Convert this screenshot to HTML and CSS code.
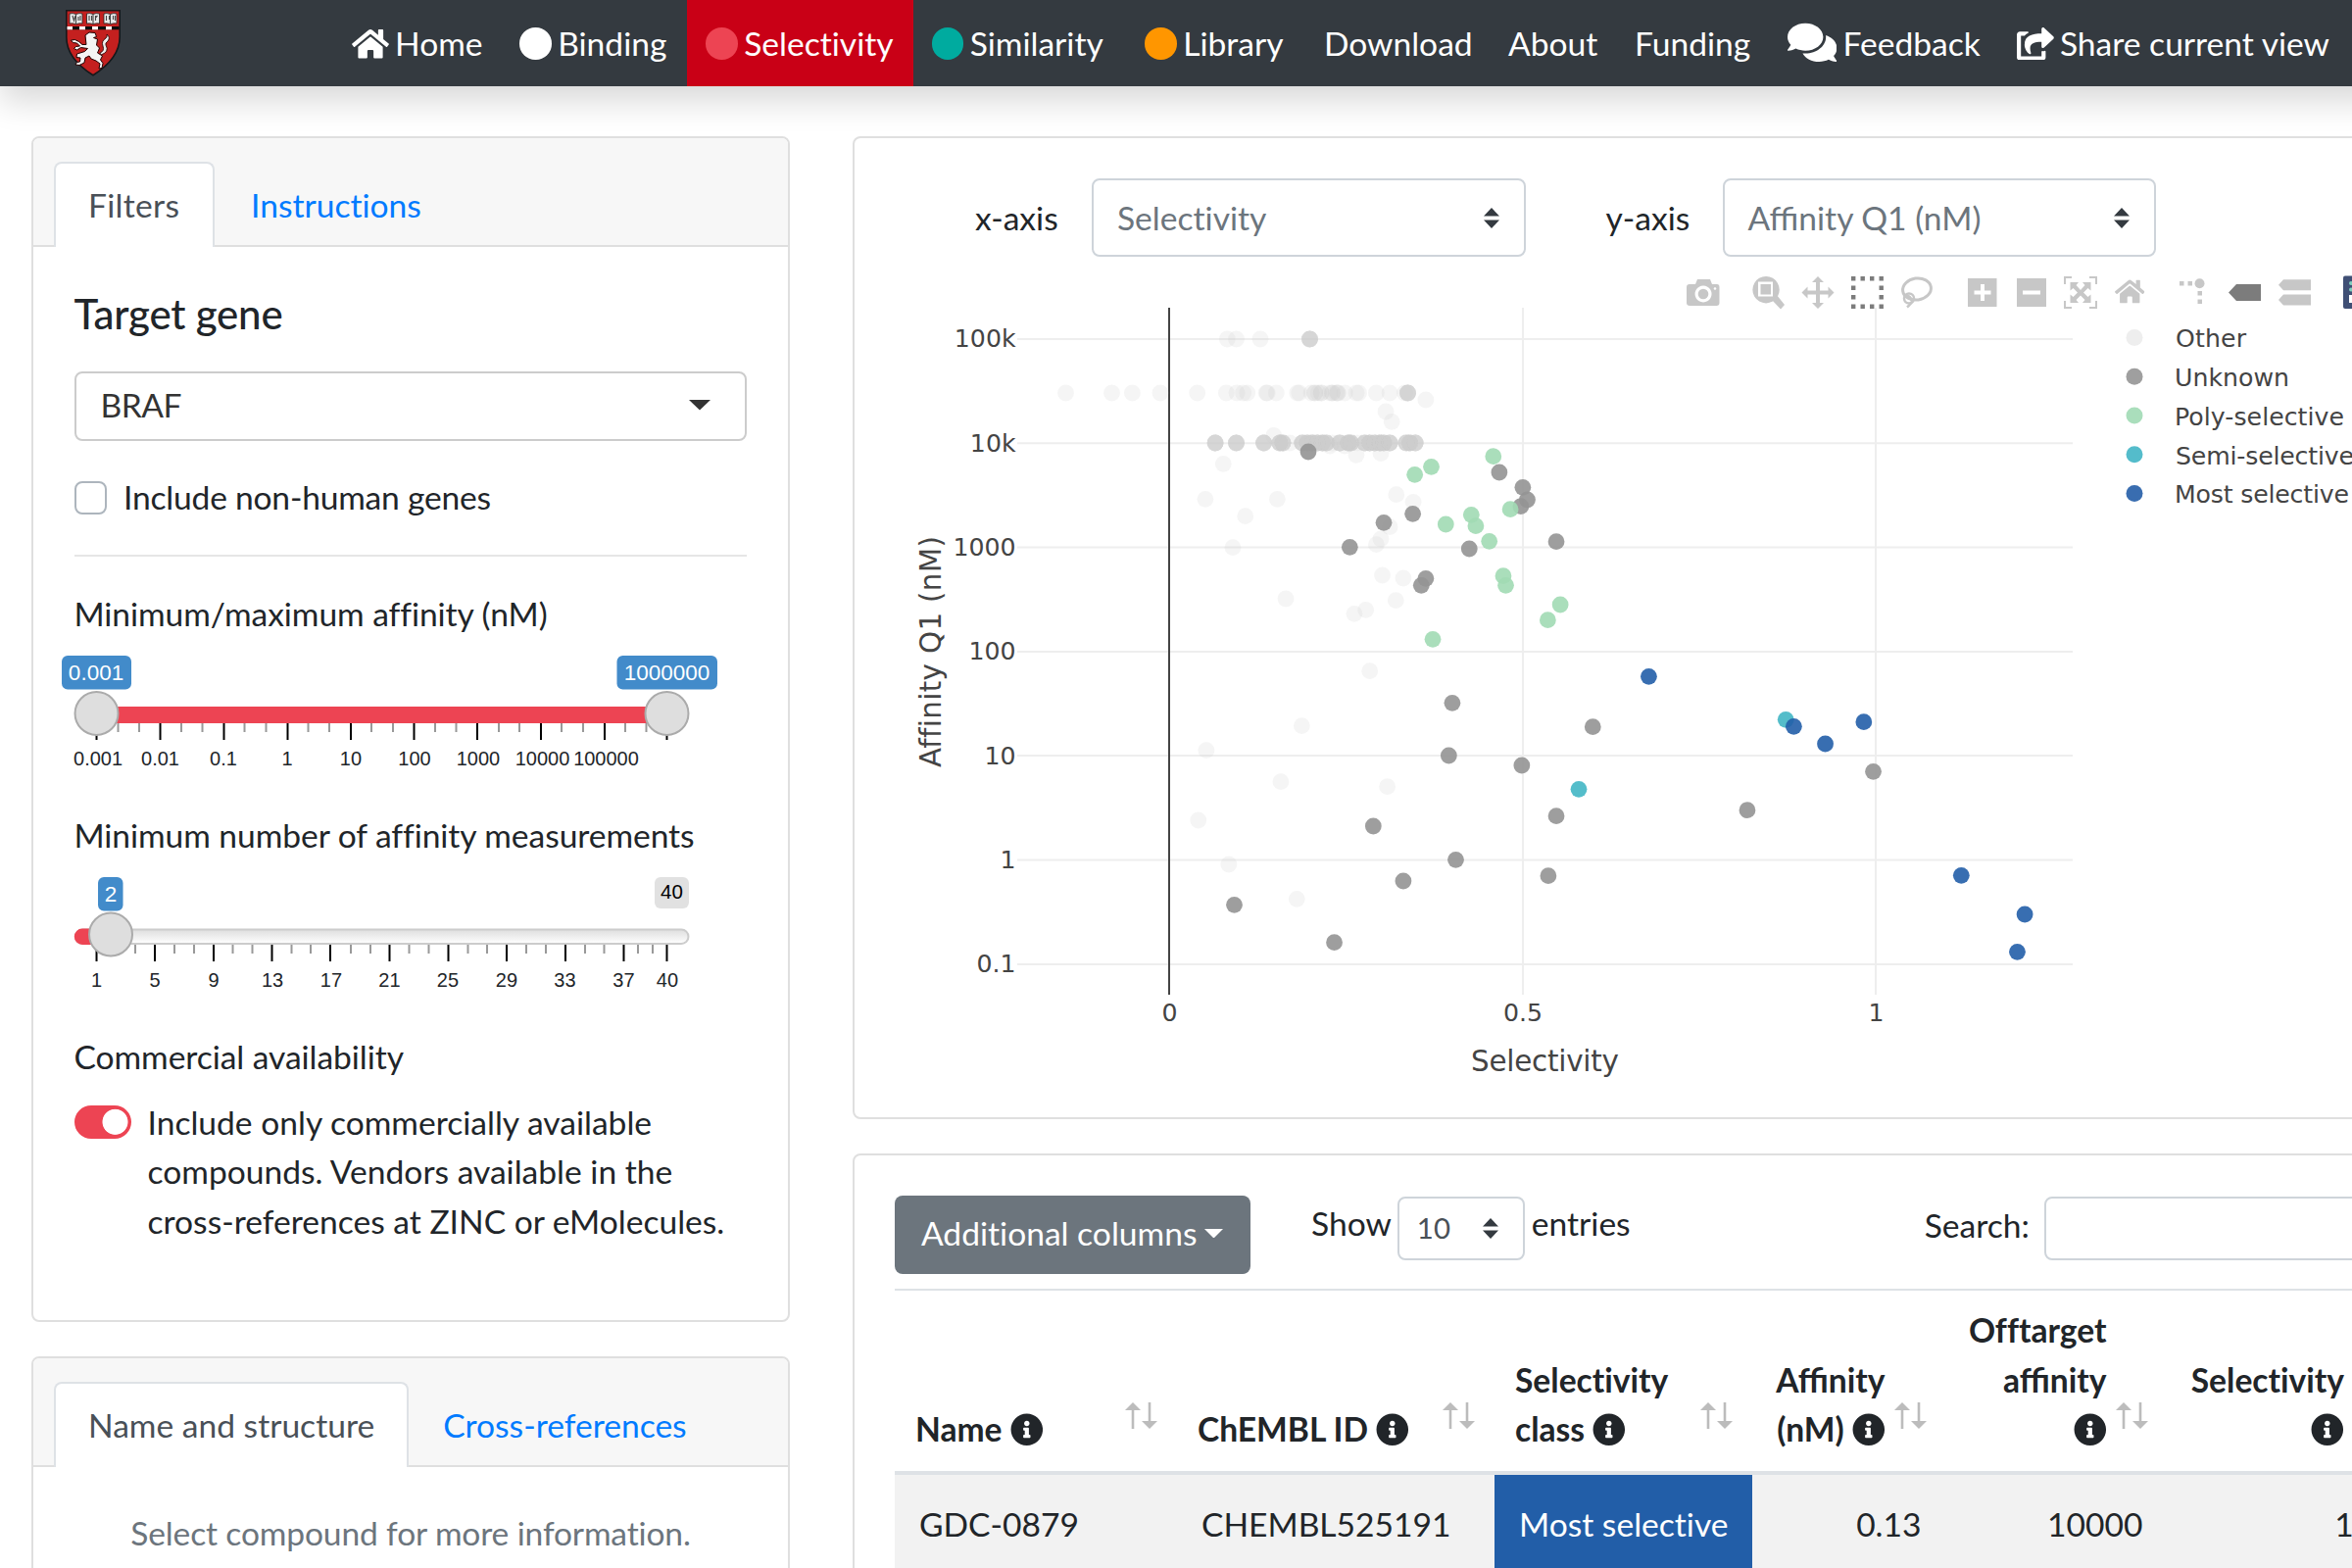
FILE: index.html
```html
<!DOCTYPE html>
<html lang="en">
<head>
<meta charset="utf-8">
<title>Selectivity</title>
<link rel="stylesheet" href="styles.css">
</head>
<body>
<svg class="defs" width="0" height="0">
  <symbol id="info" viewBox="0 0 512 512"><path d="M256 8C119.043 8 8 119.083 8 256c0 136.997 111.043 248 248 248s248-111.003 248-248C504 119.083 392.957 8 256 8zm0 110c23.196 0 42 18.804 42 42s-18.804 42-42 42-42-18.804-42-42 18.804-42 42-42zm56 254c0 6.627-5.373 12-12 12h-88c-6.627 0-12-5.373-12-12v-24c0-6.627 5.373-12 12-12h12v-64h-12c-6.627 0-12-5.373-12-12v-24c0-6.627 5.373-12 12-12h64c6.627 0 12 5.373 12 12v100h12c6.627 0 12 5.373 12 12v24z"/></symbol>
  <symbol id="updown" viewBox="0 0 16 21"><path d="M8 0l8 8.5H0zM8 21l8-8.5H0z"/></symbol>
  <symbol id="sort" viewBox="0 0 33 27"><path d="M8 0l8 8H9.300V27H6.700V8H0zM25 27l-8-8h6.700V0h2.600v19H33z"/></symbol>
  <symbol id="home" viewBox="0 0 576 512"><path d="M280.37 148.26L96 300.11V464a16 16 0 0 0 16 16l112.06-.29a16 16 0 0 0 15.92-16V368a16 16 0 0 1 16-16h64a16 16 0 0 1 16 16v95.64a16 16 0 0 0 16 16.05L464 480a16 16 0 0 0 16-16V300L295.67 148.26a12.19 12.19 0 0 0-15.3 0zM571.6 251.47L488 182.56V44.05a12 12 0 0 0-12-12h-56a12 12 0 0 0-12 12v72.61L318.47 43a48 48 0 0 0-61 0L4.34 251.47a12 12 0 0 0-1.6 16.9l25.5 31A12 12 0 0 0 45.15 301l235.22-193.74a12.19 12.19 0 0 1 15.3 0L530.9 301a12 12 0 0 0 16.9-1.6l25.5-31a12 12 0 0 0-1.7-16.93z"/></symbol>
</svg>

<div class="page">
<nav class="navbar">
  <svg class="crest" width="56" height="68" viewBox="0 0 56 68">
    <path d="M.8.8h54.400v27c0 17-13 30-27.200 39C14 58 .8 45 .8 28z" fill="#c4201f" stroke="#15181b" stroke-width="1.600"/>
    <g fill="#e9e9e9" stroke="#222" stroke-width=".8">
      <path d="M4 4q3-1 6.500.5Q14 3 17 4v10q-3-.6-6.500.6Q7 13.400 4 14z"/><path d="M21.500 4q3-1 6.500.5Q31 3 34.500 4v10q-3-.6-6.500.6-3.500-1.200-6.500-.6z"/><path d="M39 4q3-1 6.500.5Q49 3 52 4v10q-3-.6-6.500.6Q42 13.400 39 14z"/>
    </g>
    <path d="M7 6l1.500 5L10 6m3 1v4m2-5v5M24 6v5m2.500-5v5m4-5v5m2-5l-2 2m11-2v5m3-5v4m4-4v4m2-4v5M10.500 4.500v10M28 4.500v10m17.500-10v10" fill="none" stroke="#444" stroke-width="1.100"/>
    <path d="M1.500 17h53v3.200h-53z" fill="#0c0c0c"/>
    <path d="M1.500 17H7v3.200H1.500zM14 17h6v3.200h-6zM27 17h6v3.200h-6zM41 17h6v3.200h-6z" fill="#fff"/>
    <path d="M20 26l4-3 6 .5 1.500 4-3 1 4 1.500-1 6 3 3-2 5 5 3-2 4 2.500 3.500-1 5-3 .5 1-5-4-3-5-2-2-3-4 2-1 5-5 2.500-4-.5 1.500-2.500 3-.5.500-4-4-.5.500-3.500 8-2.500 3-3-7-1-4 2.500-3-1.500 2-2 4-.5-3-3-4-.5-2-2.500 4-.5 4 2 3.500 3h4z" fill="#f4f4f4" stroke="#200" stroke-width="1"/>
    <path d="M35 44q5-2 3-7-2-5 3-8 2-2 1-4 4 3 1 7-3 2-2 4 4 7-5 10z" fill="#eee" stroke="#200" stroke-width=".8"/>
  </svg>
  <div class="nav-items">
    <a class="nav-link w171"><svg class="fa" width="38" height="33.600"><use href="#home"/></svg> Home</a>
    <a class="nav-link w190"><i class="dot dot-white"></i> Binding</a>
    <a class="nav-link w231 active"><i class="dot dot-red"></i> Selectivity</a>
    <a class="nav-link w217"><i class="dot dot-teal"></i> Similarity</a>
    <a class="nav-link w183"><i class="dot dot-orange"></i> Library</a>
    <a class="nav-link w188">Download</a>
    <a class="nav-link w129">About</a>
    <a class="nav-link w156">Funding</a>
    <a class="nav-link w234"><svg class="fa-lg" width="50.400" height="44.800" viewBox="0 0 576 512"><path d="M416 192c0-88.400-93.100-160-208-160S0 103.600 0 192c0 34.300 14.100 65.900 38 92-13.400 30.200-35.500 54.200-35.800 54.500-2.200 2.300-2.800 5.700-1.500 8.700S4.800 352 8 352c36.600 0 66.900-12.300 88.700-25 32.200 15.700 70.300 25 111.300 25 114.900 0 208-71.600 208-160zm122 220c23.900-26 38-57.700 38-92 0-66.900-53.500-124.200-129.300-148.100.9 6.600 1.300 13.300 1.300 20.100 0 105.900-107.700 192-240 192-10.800 0-21.300-.8-31.700-1.900C207.800 439.600 281.800 480 368 480c41 0 79.100-9.200 111.300-25 21.800 12.700 52.100 25 88.700 25 3.200 0 6.100-1.900 7.300-4.800 1.300-2.900.7-6.300-1.500-8.700-.3-.3-22.400-24.200-35.800-54.500z"/></svg> Feedback</a>
    <a class="nav-link"><svg class="fa" width="37.800" height="33.600" viewBox="0 0 576 512"><path d="M568.482 177.448L424.479 313.433C409.3 327.768 384 317.14 384 295.985v-71.963c-144.575.97-205.566 35.113-164.775 171.353 4.483 14.973-12.846 26.567-25.006 17.330C155.252 383.105 120 326.488 120 269.339c0-143.937 117.599-172.500 264-173.312V24.012c0-21.174 25.317-31.768 40.479-17.448l144.003 135.988c10.020 9.463 10.028 25.425 0 34.896zM384 379.128V448H64V128h50.916a11.990 11.990 0 0 0 8.648-3.693c14.953-15.568 32.237-27.890 51.014-37.676C185.708 80.830 181.584 64 169.033 64H48C21.490 64 0 85.490 0 112v352c0 26.510 21.490 48 48 48h352c26.510 0 48-21.490 48-48v-88.806c0-8.288-8.197-14.066-16.011-11.302a71.830 71.830 0 0 1-34.189 3.377c-7.270-1.046-13.800 4.514-13.800 11.859z"/></svg> Share current view</a>
  </div>
</nav>

<main class="layout">
  <aside class="side">
    <section class="card filters">
      <header class="tabs"><a class="tab on filters-tab">Filters</a><a class="tab">Instructions</a></header>
      <div class="filters-body">
        <h4 class="heading">Target gene</h4>
        <div class="gene-select">BRAF<svg width="22" height="10.500" viewBox="0 0 22 10.500"><path d="M0 0h22L11 10.500z" fill="#333"/></svg></div>
        <label class="check-row"><span class="box"></span>Include non-human genes</label>
        <hr class="rule">
        <div class="field-label liga">Minimum/maximum affinity (nM)</div>
        <svg class="slider" width="687" height="175.700" viewBox="76 653 687 175.700">
          <rect x="98" y="722" width="582" height="17" fill="#ed4453"/>
          <path class="minor" d="M120.500 739v9M142 739v9M185 739v9M206.500 739v9M249.500 739v9M271.500 739v9M314.500 739v9M336 739v9M379 739v9M401 739v9M444 739v9M465.500 739v9M509 739v9M530 739v9M573 739v9M595 739v9M638 739v9M659.500 739v9"/>
          <path class="major" d="M98.500 739v17M163.500 739v17M228.500 739v17M293.500 739v17M358 739v17M422.500 739v17M487 739v17M552 739v17M617 739v17M680.500 739v17"/>
          <circle class="knob" cx="98.500" cy="729" r="22"/><circle class="knob" cx="680.500" cy="729" r="22"/>
          <rect class="tip" x="63" y="670" width="71" height="34.500" rx="6"/><rect class="tip" x="629.500" y="670" width="102.500" height="34.500" rx="6"/>
          <text class="tip-text" x="98" y="695">0.001</text><text class="tip-text" x="680.500" y="695">1000000</text>
          <g class="ticks"><text x="100" y="782.500">0.001</text><text x="163.500" y="782.500">0.01</text><text x="228" y="782.500">0.1</text><text x="293" y="782.500">1</text><text x="358" y="782.500">10</text><text x="423" y="782.500">100</text><text x="488" y="782.500">1000</text><text x="553.500" y="782.500">10000</text><text x="618.500" y="782.500">100000</text></g>
        </svg>
        <div class="field-label liga">Minimum number of affinity measurements</div>
        <svg class="slider" width="687" height="175.700" viewBox="76 879 687 175.700">
          <defs><linearGradient id="rail" x2="0" y2="1"><stop stop-color="#dedede"/><stop offset="1" stop-color="#fff"/></linearGradient></defs>
          <rect x="77" y="949.500" width="625.500" height="14.500" rx="7.200" fill="url(#rail)" stroke="#ccc" stroke-width="2"/>
          <path d="M113 948.500H84a8 8 0 0 0 0 16.500h29z" fill="#ed4453"/>
          <path class="minor" d="M138 965v9M178 965v9M198 965v9M237.500 965v9M257.500 965v9M297.500 965v9M317 965v9M358 965v9M378 965v9M417.500 965v9M437.500 965v9M477.500 965v9M497 965v9M537 965v9M557 965v9M597 965v9M616.500 965v9M651 965v9M666 965v9"/>
          <path class="major" d="M98.500 965v17M158 965v17M218 965v17M277.500 965v17M337 965v17M397.500 965v17M457.500 965v17M517 965v17M577 965v17M636.500 965v17M680.500 965v17"/>
          <circle class="knob" cx="113" cy="954.500" r="22"/>
          <rect class="tip" x="100" y="896" width="25.500" height="34.500" rx="6"/><rect x="668" y="896" width="35" height="32" rx="6" fill="#e1e1e1"/>
          <text class="tip-text" x="113" y="921">2</text><text class="max-text" x="685.500" y="918.500">40</text>
          <g class="ticks"><text x="98.500" y="1008.500">1</text><text x="158" y="1008.500">5</text><text x="218" y="1008.500">9</text><text x="278" y="1008.500">13</text><text x="338" y="1008.500">17</text><text x="397.500" y="1008.500">21</text><text x="457" y="1008.500">25</text><text x="517" y="1008.500">29</text><text x="576.500" y="1008.500">33</text><text x="636.500" y="1008.500">37</text><text x="681" y="1008.500">40</text></g>
        </svg>
        <div class="field-label">Commercial availability</div>
        <label class="switch-row"><span class="switch"></span><span>Include only commercially available<br>compounds. Vendors available in the<br>cross-references at ZINC or eMolecules.</span></label>
      </div>
    </section>
    <section class="card compound">
      <header class="tabs"><a class="tab on">Name and structure</a><a class="tab second-tab">Cross-references</a></header>
      <p class="hint">Select compound for more information.</p>
    </section>
  </aside>

  <div class="content">
    <section class="card plot">
      <div class="axes">
        <span class="axis-label">x-axis</span><div class="select">Selectivity<svg width="16" height="21"><use href="#updown"/></svg></div>
        <span class="axis-label second">y-axis</span><div class="select liga">Affinity Q1 (nM)<svg width="16" height="21"><use href="#updown"/></svg></div>
      </div>
      <svg class="chart" width="1540" height="860" viewBox="872 270 1540 860">
        <path class="grid" d="M1038 346h1077M1038 452.300h1077M1038 558.500h1077M1038 665h1077M1038 771h1077M1038 877.500h1077M1038 984h1077M1554 314v701M1914 314v701"/>
        <path class="zero" d="M1193 314v701"/>
        <g id="points"></g>
        <g class="axis-text end"><text x="1036.500" y="354">100k</text><text x="1036.500" y="460.500">10k</text><text x="1036.500" y="566.500">1000</text><text x="1036.500" y="673">100</text><text x="1036.500" y="779.500">10</text><text x="1036.500" y="885.500">1</text><text x="1036.500" y="991.500">0.1</text></g>
        <g class="axis-text mid"><text x="1193.500" y="1042">0</text><text x="1554" y="1042">0.5</text><text x="1914.500" y="1042">1</text></g>
        <text class="axis-title" x="1501" y="1092.500" textLength="151">Selectivity</text>
        <text class="axis-title" transform="translate(960 783) rotate(-90)" textLength="236">Affinity Q1 (nM)</text>
        <g class="legend">
          <circle cx="2178" cy="344.500" r="8.500" fill="#eee"/><circle cx="2178" cy="384.300" r="8.500" fill="#9f9f9f"/><circle cx="2178" cy="424" r="8.500" fill="#aadebc"/><circle cx="2178" cy="463.700" r="8.500" fill="#54bccb"/><circle cx="2178" cy="503.500" r="8.500" fill="#396db0"/>
          <text x="2220" y="354" textLength="72">Other</text><text x="2219" y="394" textLength="117">Unknown</text><text x="2219" y="433.500" textLength="173">Poly-selective</text><text x="2220" y="473.500" textLength="182">Semi-selective</text><text x="2219" y="513" textLength="178">Most selective</text>
        </g>
        <!-- plot toolbar -->
        <g fill="#c7c7c7" stroke="#c7c7c7" stroke-width="0">
          <path fill-rule="evenodd" d="M1724 290h6l2-5h13l2 5h5q2.500 0 2.500 3v16q0 3-3 3h-27q-3.500 0-3.500-3v-16q0-3 3-3zM1738 291.500a8.500 8.500 0 1 0 .1 0z"/><circle cx="1738" cy="300" r="5.300"/><circle cx="1750" cy="294.500" r="1.300" fill="#fff"/>
          <path fill-rule="evenodd" d="M1802 282a13.700 13.700 0 1 0 .1 0zM1794 287.500h15v15h-15z"/><path d="M1796.500 290h10.500v10.500h-10.500zM1808 306l5-5 8 10-4 4.500z"/>
          <path d="M1855 282l6 6h-4v8.500h8.500v-4l6 6-6 6v-4h-8.500v8.500h4l-6 6-6-6h4v-8.500h-8.500v4l-6-6 6-6v4h8.500V288h-4z"/>
          <path fill="#7c7c7c" d="M1889 282h4.400v4.400h-4.400zm9.500 0h4.400v4.400h-4.400zm9.500 0h4.400v4.400h-4.400zm9.500 0h4.400v4.400h-4.400zM1889 291.500h4.400v4.400h-4.400zm28.500 0h4.400v4.400h-4.400zM1889 301h4.400v4.400h-4.400zm28.500 0h4.400v4.400h-4.400zM1889 310.500h4.400v4.400h-4.400zm9.500 0h4.400v4.400h-4.400zm9.500 0h4.400v4.400h-4.400zm9.500 0h4.400v4.400h-4.400z"/>
          <g fill="none" stroke-width="3"><ellipse cx="1956" cy="295" rx="14.500" ry="11" transform="rotate(-8 1956 295)"/><circle cx="1948" cy="304.500" r="5" stroke-width="2.500"/><path d="M1944 302q6-1 7 6-1 2-5 5.500" stroke-width="2.500"/></g>
          <path fill-rule="evenodd" d="M2008 284h29.500v29H2008zM2021 290v6.500h-6.500v4h6.500v6.500h4v-6.500h6.500v-4h-6.500v-6.500zM2058 284h30v29h-30zM2064 296.500v4h18v-4z"/>
          <path d="M2106 282h8v2h-6v6h-2zm34 0h-8v2h6v6h2zm-34 33h8v-2h-6v-6h-2zm34 0h-8v-2h6v-6h2zM2112.500 288h8.500l-2.500 3 4.500 5 4.500-5-2.500-3h8.500v8.500l-3-2.500-4.500 4.500 4.500 4.500 3-2.500v8.500h-8.500l2.500-3-4.500-4.500-4.500 4.500 2.500 3h-8.500v-8.500l3 2.500 4.500-4.500-4.500-4.500-3 2.500z"/>
          <svg x="2158" y="283" width="30.500" height="29"><use href="#home"/></svg>
          <path d="M2224 287h4.500v4.500h-4.500zm8.500 0h4.500v4.500h-4.500zM2242.500 297h4.500v4.500h-4.500zm0 8.500h4.500v4.500h-4.500z"/><circle cx="2244.500" cy="289.300" r="5"/>
          <path fill="#7c7c7c" d="M2274 298.500l8-8.500h25v17h-25z"/>
          <path d="M2325 290.700l5-5.500h28v11h-28zM2325 306l5-5.500h28v11h-28z"/>
          <path fill="#3f4f75" d="M2393 281.500h20v33.500h-20q-2 0-2-2v-29.500q0-2 2-2z"/><circle cx="2399" cy="289" r="2" fill="#80cfbe"/><circle cx="2399" cy="295.500" r="2" fill="#80cfbe"/><path fill="#fff" d="M2397 301h4v8h-4z"/>
        </g>
      </svg>
    </section>

    <section class="card data">
      <div class="toolbar">
        <button class="columns-btn">Additional columns<svg width="19" height="9.500" viewBox="0 0 19 9.500"><path d="M0 0h19L9.500 9.500z" fill="#fff"/></svg></button>
        <label class="show">Show<span class="small-select">10<svg width="16" height="21"><use href="#updown"/></svg></span>entries</label>
        <label class="search">Search:<span class="search-box"></span></label>
      </div>
      <table class="grid-table">
        <colgroup><col class="c1"><col class="c2"><col class="c3"><col class="c4"><col class="c5"><col class="c6"></colgroup>
        <thead><tr>
          <th>Name <svg class="info" width="33.600" height="33.600"><use href="#info"/></svg><svg class="sort" width="33" height="27"><use href="#sort"/></svg></th>
          <th>ChEMBL ID <svg class="info" width="33.600" height="33.600"><use href="#info"/></svg><svg class="sort" width="33" height="27"><use href="#sort"/></svg></th>
          <th>Selectivity<br>class <svg class="info" width="33.600" height="33.600"><use href="#info"/></svg><svg class="sort" width="33" height="27"><use href="#sort"/></svg></th>
          <th class="num liga">Affinity<br>(nM) <svg class="info" width="33.600" height="33.600"><use href="#info"/></svg><svg class="sort" width="33" height="27"><use href="#sort"/></svg></th>
          <th class="num">Offtarget<br><span class="liga">affinity</span><br><svg class="info" width="33.600" height="33.600"><use href="#info"/></svg><svg class="sort" width="33" height="27"><use href="#sort"/></svg></th>
          <th class="num">Selectivity<br><svg class="info" width="33.600" height="33.600"><use href="#info"/></svg></th>
        </tr></thead>
        <tbody><tr><td>GDC-0879</td><td>CHEMBL525191</td><td class="most">Most selective</td><td class="num">0.13</td><td class="num">10000</td><td class="num">1.2</td></tr></tbody>
      </table>
    </section>
  </div>
</main>
</div>
<script src="app.js"></script>
</body>
</html>
```

FILE: styles.css
```css
* { box-sizing: border-box; }
html, body { margin: 0; width: 2400px; height: 1600px; overflow: hidden; }
body { background: #fff; color: #212529; font: 33.6px/50.4px Lato, sans-serif; font-variant-ligatures: none; }
.liga { font-variant-ligatures: normal; }
.defs { position: absolute; }
.page { width: 2480px; height: 1600px; overflow: hidden; }

.navbar { position: relative; display: flex; align-items: center; height: 88px; padding-left: 67px; background: #343a40; box-shadow: 0 16px 32px rgba(0,0,0,.15); }
.crest { flex: none; margin-top: -1px; }
.nav-items { display: flex; margin-left: 217px; height: 88px; }
.nav-link { flex: none; height: 88px; padding: 19px 0 0 19px; color: #fff; white-space: nowrap; }
.nav-link svg { fill: #fff; margin-right: -2.500px; }
.fa { vertical-align: -4.2px; }
.fa-lg { vertical-align: -8.5px; }
.active { background: #c90016; }
.dot { display: inline-block; width: 32.6px; height: 32.6px; margin-right: -2px; border-radius: 50%; vertical-align: -4px; }
.dot-white { background: #fff; } .dot-red { background: #ed4453; } .dot-teal { background: #00ab9f; } .dot-orange { background: #ff9600; }
.w171 { width: 171px; } .w190 { width: 190px; } .w231 { width: 230.500px; } .w217 { width: 217.500px; } .w183 { width: 183px; }
.w188 { width: 188px; } .w129 { width: 129px; } .w156 { width: 156px; } .w234 { width: 234px; }

.layout { display: flex; gap: 64px; padding: 51px 0 0 32px; }
.side { flex: none; width: 774px; display: flex; flex-direction: column; gap: 35px; }
.content { flex: none; width: 1620px; display: flex; flex-direction: column; gap: 34.500px; }
.card { border: 2px solid #dfdfdf; border-radius: 8px; background: #fff; }

.tabs { display: flex; height: 111px; padding: 24px 0 0 21px; background: #f7f7f7; border-bottom: 2px solid #dfdfdf; border-radius: 6px 6px 0 0; }
.tab { height: 87px; padding: 17px 34px 0 35px; border: 2px solid transparent; border-bottom: 0; color: #007bff; white-space: nowrap; }
.tab.on { padding: 17px 33px 0 33px; color: #495057; background: #fff; border-color: #dee2e6; border-radius: 8px 8px 0 0; }
.tab.filters-tab { width: 164px; letter-spacing: .3px; }
.second-tab { padding-left: 33px; }

.filters { height: 1210px; }
.filters-body { padding: 42.500px 42px 0 41.500px; }
.heading { margin: 0 0 34px; font-size: 42px; line-height: 50.4px; font-weight: 500; letter-spacing: -.2px; }
.gene-select { display: flex; justify-content: space-between; align-items: center; height: 71px; padding: 0 35px 2px 25px; border: 2px solid #ccc; border-radius: 8px; color: #333; letter-spacing: -.5px; }
.check-row { display: flex; align-items: center; gap: 17px; margin-top: 32.500px; letter-spacing: -.22px; }
.box { width: 33.6px; height: 34px; border: 2px solid #adb5bd; border-radius: 8px; }
.rule { height: 2px; margin: 33.500px 0 33px; border: 0; background: #e6e6e6; }
.field-label { height: 50.4px; white-space: nowrap; letter-spacing: -.06px; }
.slider { display: block; overflow: visible; font: 20px "Liberation Sans", Arial, sans-serif; text-anchor: middle; }
.minor { stroke: #999; stroke-width: 2; }
.major { stroke: #000; stroke-width: 2; }
.knob { fill: #dedede; stroke: #ababab; stroke-width: 2; }
.tip { fill: #428bca; }
.tip-text { fill: #fff; font-size: 22.5px; }
.max-text { fill: #000; font-size: 20.5px; }
.ticks { fill: #212529; }
.switch-row { display: flex; gap: 17px; margin-top: 16px; white-space: nowrap; }
.switch { flex: none; width: 58px; height: 33.6px; margin-top: 8.500px; border-radius: 17px; background: radial-gradient(circle at 41.500px 16.800px, #fff 12.600px, #ed4453 13.400px); }

.compound { height: 300px; }
.hint { margin: 42px 0 0; text-align: center; color: #6c757d; letter-spacing: -.15px; }

.plot { height: 1003px; padding-top: 41px; }
.axes { display: flex; align-items: center; height: 80px; padding-left: 123px; }
.axis-label { width: 119px; white-space: nowrap; }
.second { margin-left: 82px; width: 119px; }
.select { display: flex; justify-content: space-between; align-items: center; width: 442.500px; height: 80px; padding: 0 25px 0 24px; border: 2px solid #ced4da; border-radius: 8px; color: #6c757d; white-space: nowrap; }
.select svg, .small-select svg { fill: #343a40; }
.chart { display: block; margin-top: 8px; font-family: "DejaVu Sans", Verdana, sans-serif; }
.grid { stroke: #eee; stroke-width: 2.100; }
.zero { stroke: #444; stroke-width: 2; }
.axis-text { font-size: 25.200px; fill: #444; }
.end { text-anchor: end; } .mid { text-anchor: middle; }
.axis-title { font-size: 29.400px; fill: #444; }
.legend { font-size: 25.200px; fill: #444; }

.data { height: 600px; padding: 41px 0 0 41px; }
.toolbar { display: flex; height: 95px; }
.columns-btn { display: flex; flex: none; align-items: center; gap: 8px; width: 363px; height: 80px; padding: 0 0 2px 27px; border: 0; border-radius: 8px; background: #6c757d; color: #fff; font: inherit; font-variant-ligatures: none; white-space: nowrap; }
.show { display: flex; flex: none; height: 65px; margin-left: 62px; padding-top: 3px; }
.small-select { display: flex; flex: none; justify-content: space-between; align-items: center; width: 130px; height: 65px; margin: -2px 7px 0 6px; padding: 0 25px 0 18px; border: 2px solid #ced4da; border-radius: 8px; font-size: 29.400px; color: #495057; }
.search { display: flex; flex: none; margin-left: 300px; padding-top: 5.500px; }
.search-box { width: 420px; height: 65px; margin: -4.500px 0 0 15px; border: 2px solid #ced4da; border-radius: 8px; }

.grid-table { table-layout: fixed; width: 1541px; border-collapse: separate; border-spacing: 0; }
.c1 { width: 288px; } .c2 { width: 324px; } .c3 { width: 262.500px; } .c4 { width: 198px; } .c5 { width: 226px; } .c6 { width: 242.500px; }
th { position: relative; height: 190px; padding: 0 0 17px 21px; vertical-align: bottom; text-align: left; font-weight: 700; white-space: nowrap; border-top: 2px solid #dee2e6; border-bottom: 4px solid #dee2e6; }
th.num { padding-right: 62px; text-align: right; }
.info { vertical-align: -4.500px; fill: #212529; }
.sort { position: absolute; right: 20px; bottom: 43px; fill: #bcbcbc; }
td { height: 101px; padding: 0 0 0 25px; background: #f2f2f2; white-space: nowrap; }
td.num { padding-right: 25px; text-align: right; }
td.most { background: #225ea8; color: #fff; }
```

FILE: app.js
```javascript
// Compounds per selectivity class as [u, v] grid positions, drawn back to front.
const row = (v, us) => us.map(u => [u, v]);
const stacked = list => [...list, ...list, ...list, ...list, ...list, ...list, ...list];
const other = [
  ...row(138, [690, 708, 756]),
  ...stacked(row(138, [855])),
  ...row(303, [367, 459, 500, 556, 630, 688, 709, 722, 730, 768, 770, 788, 830, 834, 858, 865, 865, 872, 878, 878, 895, 900, 900, 908, 911, 911, 925, 948, 953, 988, 1015, 1045]),
  ...stacked(row(303, [1051])),
  ...row(456, [815, 900, 950]),
  ...stacked(row(456, [666, 708, 763, 795, 801, 840, 850, 860, 870, 880, 888, 915, 932, 937, 965, 975, 985, 995, 1003, 1015, 1048, 1055, 1066])),
  [1087, 324], [1007, 360], [1019, 391], [783, 433], [682, 520], [646, 628], [790, 628], [726, 680],
  [948, 493], [997, 488], [895, 465], [925, 465], [1028, 614], [1062, 637], [1015, 713], [997, 750], [988, 767], [701, 776],
  [1000, 861], [1042, 870], [807, 933], [1027, 938], [967, 967], [944, 979], [975, 1154],
  [839, 1322], [648, 1397], [797, 1493], [1010, 1508], [632, 1611], [693, 1746], [829, 1852]
];
const unknown = [
  [852, 483], [1234, 546], [1281, 592], [1290, 630], [1277, 650], [1061, 673], [1003, 700], [935, 775],
  [1174, 780], [1348, 758], [1087, 871], [1078, 892], [1140, 1252], [1133, 1413], [1421, 1325], [1279, 1443],
  [1348, 1598], [982, 1629], [1147, 1732], [1042, 1797], [1332, 1781], [704, 1870], [904, 1985], [1730, 1580], [1982, 1462]
];
const poly = [
  [1222, 497], [1098, 529], [1065, 553], [1256, 659], [1178, 676], [1187, 710], [1127, 705], [1214, 757],
  [1242, 863], [1247, 892], [1356, 951], [1331, 998], [1101, 1057]
];
const semi = [[1393, 1516], [1807, 1303]];
const most = [[1533, 1171], [1823, 1324], [1886, 1377], [1963, 1310], [2158, 1780], [2285, 1899], [2270, 2014]];

const layer = document.getElementById('points');
for (const [points, color, alpha] of [
  [other, '#cccccc', 0.2], [unknown, '#949494', 0.9], [poly, '#a1dab4', 0.9], [semi, '#41b6c4', 0.9], [most, '#225ea8', 0.9]
]) {
  for (const [u, v] of points) {
    const c = document.createElementNS('http://www.w3.org/2000/svg', 'circle');
    c.setAttribute('cx', 900.3 + u * 0.5102);
    c.setAttribute('cy', 300 + v / 3);
    c.setAttribute('r', 8.4);
    c.setAttribute('fill', color);
    c.setAttribute('fill-opacity', alpha);
    layer.appendChild(c);
  }
}
```
